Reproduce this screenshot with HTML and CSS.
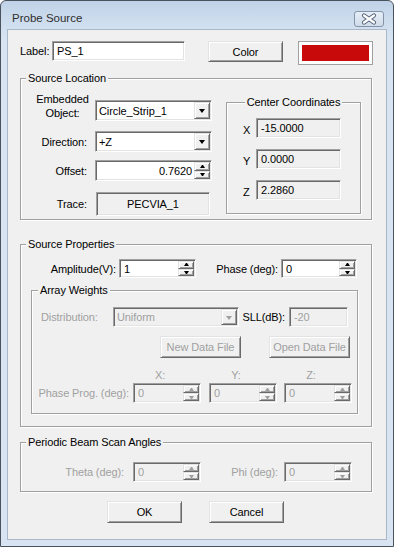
FILE: index.html
```html
<!DOCTYPE html>
<html>
<head>
<meta charset="utf-8">
<link rel="stylesheet" href="styles.css">
</head>
<body>
<div class="window">
  <div class="titlebar">
    <span class="title">Probe Source</span>
    <div class="close">
      <svg width="28" height="14" viewBox="0 0 28 14">
        <path d="M9 3.5 L19 10.5 M19 3.5 L9 10.5" stroke="#56657a" stroke-width="4.2" stroke-linecap="round" fill="none"/>
        <path d="M9 3.5 L19 10.5 M19 3.5 L9 10.5" stroke="#ffffff" stroke-width="2.2" stroke-linecap="round" fill="none"/>
      </svg>
    </div>
  </div>
  <div class="client">
    <div class="row1">
      <span class="lbl-name">Label:</span>
      <div class="edit e-name">PS_1</div>
      <div class="btn b-color">Color</div>
      <div class="swatch"><span></span></div>
    </div>

    <div class="group g1">
      <div class="gtitle">Source Location</div>
      <div class="g1-body">
        <div class="loc-left">
          <div class="lrow ra">
            <div class="llbl emb">Embedded<br>Object:</div>
            <div class="edit combo"><span class="txt">Circle_Strip_1</span><span class="dd"><i></i></span></div>
          </div>
          <div class="lrow rb">
            <div class="llbl">Direction:</div>
            <div class="edit combo"><span class="txt">+Z</span><span class="dd"><i></i></span></div>
          </div>
          <div class="lrow rc">
            <div class="llbl">Offset:</div>
            <div class="edit spinbox off"><span class="txt right">0.7620</span><span class="spin"><b class="up"></b><b class="dn"></b></span></div>
          </div>
          <div class="lrow rd">
            <div class="llbl">Trace:</div>
            <div class="edit ro trace">PECVIA_1</div>
          </div>
        </div>
        <div class="group gcc">
          <div class="gtitle center">Center Coordinates</div>
          <div class="ccrow first"><span class="cclbl">X</span><div class="edit ro cc">-15.0000</div></div>
          <div class="ccrow"><span class="cclbl">Y</span><div class="edit ro cc">0.0000</div></div>
          <div class="ccrow"><span class="cclbl">Z</span><div class="edit ro cc">2.2860</div></div>
        </div>
      </div>
    </div>

    <div class="group g2">
      <div class="gtitle">Source Properties</div>
      <div class="prow">
        <div class="plbl1">Amplitude(V):</div>
        <div class="edit spinbox amp"><span class="txt">1</span><span class="spin"><b class="up"></b><b class="dn"></b></span></div>
        <div class="plbl2">Phase (deg):</div>
        <div class="edit spinbox ph"><span class="txt">0</span><span class="spin"><b class="up"></b><b class="dn"></b></span></div>
      </div>
      <div class="group g-arr">
        <div class="gtitle">Array Weights</div>
        <div class="drow">
          <div class="dist-lbl dis">Distribution:</div>
          <div class="edit combo dcombo disabled"><span class="txt">Uniform</span><span class="dd"><i></i></span></div>
          <div class="sll-lbl">SLL(dB):</div>
          <div class="edit disabled sll">-20</div>
        </div>
        <div class="fbrow">
          <div class="btn disabled b-new">New Data File</div>
          <div class="btn disabled b-open">Open Data File</div>
        </div>
        <div class="xyzrow dis">
          <span class="xyz">X:</span><span class="xyz g8">Y:</span><span class="xyz g7">Z:</span>
        </div>
        <div class="pprow">
          <div class="pp-lbl dis">Phase Prog. (deg):</div>
          <div class="edit spinbox disabled pp"><span class="txt">0</span><span class="spin"><b class="up"></b><b class="dn"></b></span></div>
          <div class="edit spinbox disabled pp g8"><span class="txt">0</span><span class="spin"><b class="up"></b><b class="dn"></b></span></div>
          <div class="edit spinbox disabled pp g7"><span class="txt">0</span><span class="spin"><b class="up"></b><b class="dn"></b></span></div>
        </div>
      </div>
    </div>

    <div class="group g3">
      <div class="gtitle">Periodic Beam Scan Angles</div>
      <div class="srow">
        <div class="th-lbl dis">Theta (deg):</div>
        <div class="edit spinbox disabled pp"><span class="txt">0</span><span class="spin"><b class="up"></b><b class="dn"></b></span></div>
        <div class="phi-lbl dis">Phi (deg):</div>
        <div class="edit spinbox disabled pp"><span class="txt">0</span><span class="spin"><b class="up"></b><b class="dn"></b></span></div>
      </div>
    </div>

    <div class="brow">
      <div class="btn b-ok">OK</div>
      <div class="btn b-cancel">Cancel</div>
    </div>
  </div>
</div>
</body>
</html>
```

FILE: styles.css
```css
* { box-sizing: border-box; }
html, body { margin: 0; padding: 0; background: #ffffff; }
body { font-family: "Liberation Sans", Arial, sans-serif; font-size: 11px; letter-spacing: -0.1px; color: #000; }

.window {
  width: 394px; height: 547px;
  border: 1px solid #4a525c;
  border-radius: 6px 6px 0 0;
  background: linear-gradient(#bfd2e7, #cfdeee 22px, #d8e4f2 40px, #d8e4f2);
  padding: 0 6px 6px;
  display: flex; flex-direction: column;
}
.titlebar { height: 28px; display: flex; align-items: flex-start; }
.title { margin: 9px 0 0 5px; font-size: 11.5px; line-height: 16px; letter-spacing: 0; color: #2e2e2e; }
.close {
  margin: 10px 3px 0 auto;
  width: 30px; height: 16px;
  border: 1px solid #8493a8; border-radius: 3px;
  background: linear-gradient(#e6eef7, #d0dcea);
  display: flex; align-items: center; justify-content: center;
}
.close svg { display: block; }

.client {
  width: 380px; height: 511px;
  border: 1px solid #a9b8c9;
  background: #f0f0f0;
  padding: 11px 0 0 12px;
}

/* controls */
.edit {
  display: flex; align-items: center;
  border: 1px solid; border-color: #a0a0a0 #ffffff #ffffff #a0a0a0;
  box-shadow: inset 1px 1px 0 #696969, inset -1px -1px 0 #e3e3e3;
  background: #fff;
  padding: 1px 1px 1px 4px;
  white-space: nowrap;
}
.edit.ro, .edit.disabled { background: #f0f0f0; }
.edit.disabled { color: #a0a0a0; }
.txt { flex: 1; }
.txt.right { text-align: right; padding-right: 2px; }

.dd, .spin b {
  background: #f0f0f0;
  border: 1px solid; border-color: #e3e3e3 #696969 #696969 #e3e3e3;
  box-shadow: inset 1px 1px 0 #fff, inset -1px -1px 0 #a0a0a0;
}
.dd {
  width: 16px; height: 100%;
  display: flex; align-items: center; justify-content: center;
}
.dd i {
  display: block; width: 1px; height: 0;
  border-left: 3px solid transparent; border-right: 3px solid transparent;
  border-top: 4px solid #000;
  margin-top: 1px;
}
.disabled .dd i { border-top-color: #a0a0a0; }

.spin { width: 16px; height: 100%; display: flex; flex-direction: column; }
.spin b { flex: 1; display: flex; align-items: center; justify-content: center; }
.spin b::after {
  content: ""; display: block; width: 1px; height: 0;
  border-left: 2px solid transparent; border-right: 2px solid transparent;
}
.spin b.up::after { border-bottom: 3px solid #000; }
.spin b.dn::after { border-top: 3px solid #000; }
.disabled .spin b.up::after { border-bottom-color: #a0a0a0; }
.disabled .spin b.dn::after { border-top-color: #a0a0a0; }

.btn {
  display: flex; align-items: center; justify-content: center;
  background: #f0f0f0;
  border: 1px solid; border-color: #e3e3e3 #696969 #696969 #e3e3e3;
  box-shadow: inset 1px 1px 0 #fff, inset -1px -1px 0 #a0a0a0;
}
.btn.disabled { color: #a0a0a0; }
.dis { color: #a0a0a0; }

/* row 1 */
.row1 { display: flex; align-items: flex-start; height: 24px; }
.lbl-name { width: 32px; line-height: 21px; }
.e-name { width: 133px; height: 20px; }
.b-color { margin-left: 23px; width: 75px; height: 21px; }
.swatch {
  margin-left: 15px; width: 75px; height: 24px;
  border: 1px solid #a0a0a0; background: #fff; padding: 3px;
}
.swatch span { display: block; height: 100%; background: #c80a0a; }

/* groups */
.group {
  border: 1px solid #a0a0a0;
  box-shadow: 1px 1px 0 #fff, inset 1px 1px 0 #fff;
}
.gtitle {
  width: max-content; height: 13px; line-height: 13px;
  margin: -7px 0 0 5px; padding: 0 2px;
  background: #f0f0f0;
}
.gtitle.center { margin-left: auto; margin-right: auto; }

.g1 { margin-top: 13px; width: 352px; height: 142px; }
.g1-body { display: flex; align-items: flex-start; }
.loc-left { margin: 7px 0 0 9px; width: 182px; }
.lrow { display: flex; align-items: center; }
.ra { align-items: flex-start; }
.llbl { width: 65px; text-align: right; padding-right: 8px; }
.llbl.emb { text-align: center; padding-right: 0; line-height: 14px; }
.combo { width: 117px; height: 21px; padding-left: 3px; }
.ra .combo { margin-top: 8px; }
.rb { margin-top: 10px; }
.rc { margin-top: 8px; }
.rd { margin-top: 11px; }
.off { width: 117px; height: 21px; }
.trace { width: 114px; height: 24px; margin-left: 1px; justify-content: center; padding-left: 1px; }

.gcc { margin: 17px 0 0 14px; width: 135px; height: 112px; }
.ccrow { display: flex; align-items: center; margin: 11px 0 0 16px; }
.ccrow.first { margin-top: 9px; }
.cclbl { width: 13px; padding-top: 3px; }
.cc { width: 85px; height: 20px; }

.g2 { margin-top: 24px; width: 352px; height: 183px; }
.prow { display: flex; align-items: center; margin-top: 8px; }
.plbl1 { width: 98px; text-align: right; padding-right: 3px; }
.plbl2 { width: 85px; text-align: right; padding-right: 3px; }
.amp { width: 77px; height: 19px; }
.ph { width: 76px; height: 19px; }

.g-arr { margin: 12px 0 0 10px; width: 327px; height: 124px; }
.g-arr .gtitle { margin-left: 6px; }
.drow { display: flex; align-items: center; margin-top: 10px; }
.dist-lbl { width: 81px; padding-left: 9px; }
.dcombo { width: 126px; height: 20px; }
.sll-lbl { width: 50px; text-align: right; padding-right: 4px; }
.sll { width: 59px; height: 20px; }
.fbrow { display: flex; margin-top: 9px; }
.b-new { margin-left: 128px; width: 81px; height: 22px; }
.b-open { margin-left: 28px; width: 81px; height: 22px; }
.xyzrow { display: flex; margin: 11px 0 0 101px; line-height: 13px; }
.xyz { width: 68px; text-align: center; padding-right: 14px; }
.xyz.g8, .pp.g8 { margin-left: 8px; }
.xyz.g7, .pp.g7 { margin-left: 7px; }
.pprow { display: flex; align-items: center; margin-top: 1px; }
.pp-lbl { width: 101px; text-align: right; padding-right: 4px; }
.pp { width: 68px; height: 20px; }

.g3 { margin-top: 15px; width: 352px; height: 50px; }
.srow { display: flex; align-items: center; margin-top: 13px; }
.th-lbl { width: 112px; text-align: right; padding-right: 9px; }
.phi-lbl { width: 83px; text-align: right; padding-right: 6px; }

.brow { display: flex; margin-top: 9px; }
.b-ok { margin-left: 87px; width: 75px; height: 22px; }
.b-cancel { margin-left: 27px; width: 75px; height: 22px; }
```
